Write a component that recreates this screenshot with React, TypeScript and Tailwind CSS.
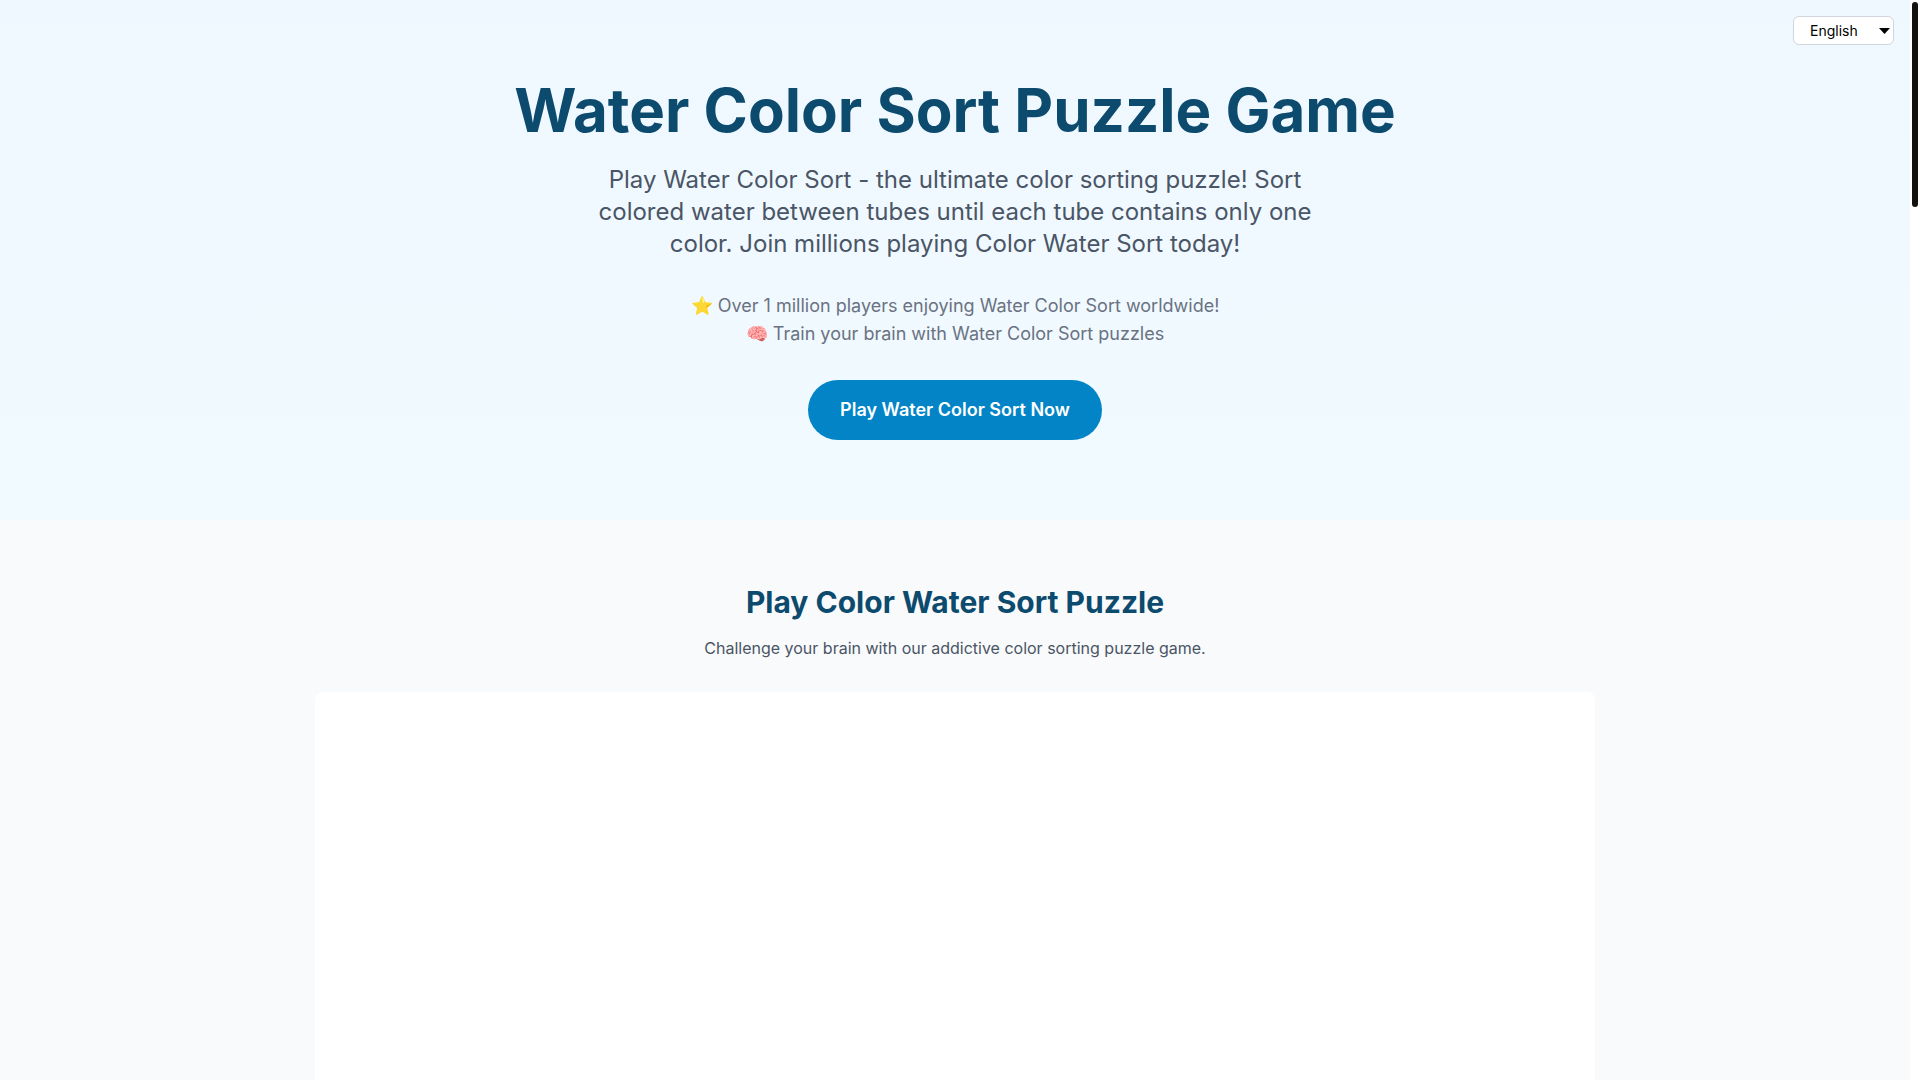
export default function App() {
  return (
    <div className="flex h-screen overflow-hidden bg-white font-[Inter,sans-serif]">
      <main className="relative min-w-0 flex-1 overflow-hidden bg-[#f9fafc]">
        <div className="absolute top-4 right-4">
          <select
            aria-label="Language"
            defaultValue="en"
            className="h-[29px] w-[101px] appearance-none rounded-md border border-gray-300 bg-white px-4 text-sm text-black"
          >
            <option value="en">English</option>
          </select>
          <svg
            viewBox="0 0 11 6"
            className="pointer-events-none absolute top-3 right-1 h-[6px] w-[11px]"
            aria-hidden="true"
          >
            <path d="M0 0h11L5.5 6z" fill="#000" />
          </svg>
        </div>

        <header className="flex flex-col items-center bg-linear-to-b from-[#eff8ff] to-[#f1faff] px-4 py-20 text-center">
          <h1 className="mb-6 text-6xl font-bold text-[#0c4a6e]">Water Color Sort Puzzle Game</h1>
          <p className="mb-8 max-w-3xl text-2xl text-gray-600">
            Play Water Color Sort - the ultimate color sorting puzzle! Sort colored water between tubes
            until each tube contains only one color. Join millions playing Color Water Sort today!
          </p>
          <p className="mb-8 text-lg text-gray-500">
            ⭐ Over 1 million players enjoying Water Color Sort worldwide!
            <br />
            🧠 Train your brain with Water Color Sort puzzles
          </p>
          <button type="button" className="rounded-full bg-[#0284c7] px-8 py-4 text-lg font-semibold text-white">
            Play Water Color Sort Now
          </button>
        </header>

        <section className="px-4 py-16 text-center">
          <h2 className="mb-4 text-3xl font-bold text-[#0c4a6e]">Play Color Water Sort Puzzle</h2>
          <p className="mb-8 text-base text-gray-600">
            Challenge your brain with our addictive color sorting puzzle game.
          </p>
          <div className="mx-auto h-[800px] max-w-7xl rounded-lg bg-white" />
        </section>
      </main>

      {/* scrollbar */}
      <div className="w-[10px] shrink-0 p-[2px]">
        <div className="h-[205px] rounded-full bg-[#14120e]" />
      </div>
    </div>
  );
}
